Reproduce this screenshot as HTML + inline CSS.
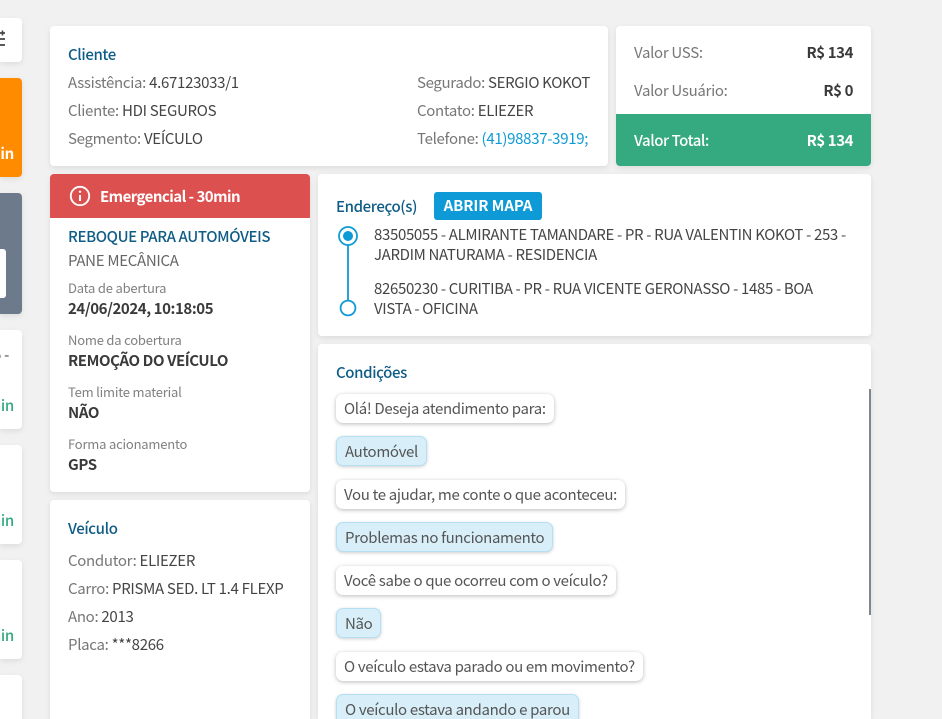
<!DOCTYPE html>
<html lang="pt-BR"><head><meta charset="utf-8"><style>
*{box-sizing:border-box}
html,body{margin:0;padding:0;width:942px;height:719px;overflow:hidden;background:#f1f1f1}
#r{position:absolute;left:0;top:0;width:942px;height:719px;overflow:hidden;background:#f1f1f1;font-family:"Noto Sans CJK JP","Liberation Sans",sans-serif;font-size:15px;color:#444;letter-spacing:-.3px}
.c{position:absolute;background:#fff;border-radius:4px;box-shadow:0 2px 6px rgba(0,0,0,.09)}
.l{left:0;width:22px;border-radius:0 4px 4px 0}
.t{position:absolute;white-space:nowrap;line-height:20px;height:20px}
.g{color:#777}.d{color:#444}
.e{letter-spacing:-.34px}
.h{color:#0f5c86;font-weight:500;letter-spacing:-.38px}
.b{font-weight:700;color:#3a3a3a;letter-spacing:-.42px}
.s{font-size:13px;color:#808080;letter-spacing:-.2px}
.w{color:#fff}
.m{right:928px;font-weight:500;color:#35a97f}
.q{position:absolute;left:336px;height:29px;border-radius:7px;background:#fff;box-shadow:0 1px 4px rgba(0,0,0,.28);padding:0 8px;line-height:29px;white-space:nowrap;color:#555;letter-spacing:-.33px}
.a{height:30px;background:#d8eff9;border:1px solid #b5e0f3;line-height:29px;box-shadow:0 1px 3px rgba(0,0,0,.2)}
</style></head><body><div id="r">

<div class="c l" style="top:18px;height:44px"></div>
<svg style="position:absolute;left:0;top:28px" width="8" height="20"><path d="M0 5h5M0 11h5M0 17h5" stroke="#444" stroke-width="1.7" fill="none"/><path d="M2.5 2.5v5" stroke="#444" stroke-width="1.6"/></svg>
<div class="c l" style="top:78px;height:99px;background:#ff8c00"></div>
<span class="t w" style="right:928px;top:144px;font-weight:700">min</span>
<div class="c l" style="top:193px;height:121px;background:#6c7a8c"></div>
<div style="position:absolute;left:0;top:249px;width:6px;height:49px;background:#fff;border-radius:0 3px 3px 0"></div>
<div class="c l" style="top:330px;height:99px"></div>
<span class="t d" style="right:933px;top:345px">5 -</span>
<span class="t m" style="top:396px">min</span>
<div class="c l" style="top:445px;height:99px"></div>
<span class="t m" style="top:511px">min</span>
<div class="c l" style="top:560px;height:99px"></div>
<span class="t m" style="top:626px">min</span>
<div class="c l" style="top:675px;height:44px;border-radius:0 4px 0 0"></div>

<div class="c" style="left:50px;top:26px;width:558px;height:140px"></div>
<span class="t h" style="left:68px;top:45px">Cliente</span>
<span class="t g" style="left:68px;top:73px">Assistência: <span class="d">4.67123033/1</span></span>
<span class="t g" style="left:68px;top:101px">Cliente: <span class="d">HDI SEGUROS</span></span>
<span class="t g" style="left:68px;top:129px">Segmento: <span class="d">VEÍCULO</span></span>
<span class="t g e" style="left:417px;top:73px">Segurado: <span class="d">SERGIO KOKOT</span></span>
<span class="t g" style="left:417px;top:101px">Contato: <span class="d">ELIEZER</span></span>
<span class="t g" style="left:417px;top:129px">Telefone: <span style="color:#0e9ad6">(41)98837-3919;</span></span>

<div class="c" style="left:616px;top:26px;width:255px;height:140px;overflow:hidden"><div style="position:absolute;left:0;top:88px;width:255px;height:52px;background:#35a97f"></div></div>
<span class="t g" style="left:634px;top:43px">Valor USS:</span>
<span class="t b" style="right:89px;top:43px">R$ 134</span>
<span class="t g" style="left:634px;top:81px">Valor Usuário:</span>
<span class="t b" style="right:89px;top:81px">R$ 0</span>
<span class="t w" style="left:634px;top:131px;font-weight:500;letter-spacing:-.45px">Valor Total:</span>
<span class="t w" style="right:89px;top:131px;font-weight:700;letter-spacing:-.45px">R$ 134</span>

<div class="c" style="left:50px;top:174px;width:260px;height:318px;overflow:hidden"><div style="height:44px;background:#dc5050"></div></div>
<svg style="position:absolute;left:69px;top:185px" width="22" height="22" viewBox="0 0 22 22"><circle cx="11" cy="11" r="9.2" fill="none" stroke="#fff" stroke-width="1.9"/><path d="M11 10v6" stroke="#fff" stroke-width="2"/><circle cx="11" cy="6.8" r="1.2" fill="#fff"/></svg>
<span class="t w" style="left:100px;top:187px;font-weight:700;letter-spacing:-.55px">Emergencial - 30min</span>
<span class="t h" style="left:68px;top:227px">REBOQUE PARA AUTOMÓVEIS</span>
<span class="t" style="left:68px;top:251px;color:#666">PANE MECÂNICA</span>
<span class="t s" style="left:68px;top:278px">Data de abertura</span>
<span class="t b" style="left:68px;top:299px">24/06/2024, 10:18:05</span>
<span class="t s" style="left:68px;top:330px">Nome da cobertura</span>
<span class="t b" style="left:68px;top:351px">REMOÇÃO DO VEÍCULO</span>
<span class="t s" style="left:68px;top:382px">Tem limite material</span>
<span class="t b" style="left:68px;top:403px">NÃO</span>
<span class="t s" style="left:68px;top:434px">Forma acionamento</span>
<span class="t b" style="left:68px;top:455px">GPS</span>

<div class="c" style="left:50px;top:500px;width:260px;height:219px;border-radius:4px 4px 0 0"></div>
<span class="t h" style="left:68px;top:519px">Veículo</span>
<span class="t g" style="left:68px;top:551px">Condutor: <span class="d">ELIEZER</span></span>
<span class="t g" style="left:68px;top:579px">Carro: <span class="d">PRISMA SED. LT 1.4 FLEXP</span></span>
<span class="t g" style="left:68px;top:607px">Ano: <span class="d">2013</span></span>
<span class="t g" style="left:68px;top:635px">Placa: <span class="d">***8266</span></span>

<div class="c" style="left:318px;top:174px;width:553px;height:162px"></div>
<span class="t h" style="left:336px;top:197px">Endereço(s)</span>
<div style="position:absolute;left:434px;top:192px;width:108px;height:28px;background:#0e9ad6;border-radius:3px;color:#fff;font-weight:700;text-align:center;line-height:28px;letter-spacing:-.1px">ABRIR MAPA</div>
<svg style="position:absolute;left:336px;top:224px" width="24" height="96"><circle cx="12" cy="12" r="9" fill="none" stroke="#0e9ad6" stroke-width="1.8"/><circle cx="12" cy="12" r="5" fill="#0e9ad6"/><path d="M12 21V76" stroke="#0e9ad6" stroke-width="1.8"/><circle cx="12" cy="84" r="7.4" fill="#fff" stroke="#0e9ad6" stroke-width="1.8"/></svg>
<span class="t d e" style="left:374px;top:225px">83505055 - ALMIRANTE TAMANDARE - PR - RUA VALENTIN KOKOT - 253 -</span>
<span class="t d e" style="left:374px;top:245px">JARDIM NATURAMA - RESIDENCIA</span>
<span class="t d e" style="left:374px;top:279px">82650230 - CURITIBA - PR - RUA VICENTE GERONASSO - 1485 - BOA</span>
<span class="t d e" style="left:374px;top:299px">VISTA - OFICINA</span>

<div class="c" style="left:318px;top:344px;width:553px;height:375px;border-radius:4px 4px 0 0"></div>
<span class="t h" style="left:336px;top:363px">Condições</span>
<div class="q" style="top:394px">Olá! Deseja atendimento para:</div>
<div class="q a" style="top:436px">Automóvel</div>
<div class="q" style="top:480px">Vou te ajudar, me conte o que aconteceu:</div>
<div class="q a" style="top:522px">Problemas no funcionamento</div>
<div class="q" style="top:566px">Você sabe o que ocorreu com o veículo?</div>
<div class="q a" style="top:608px">Não</div>
<div class="q" style="top:652px">O veículo estava parado ou em movimento?</div>
<div class="q a" style="top:694px;height:25px;border-bottom:0;border-radius:7px 7px 0 0;overflow:hidden">O veículo estava andando e parou</div>
<div style="position:absolute;left:869px;top:389px;width:2px;height:226px;background:#7d8792"></div>
</div></body></html>
